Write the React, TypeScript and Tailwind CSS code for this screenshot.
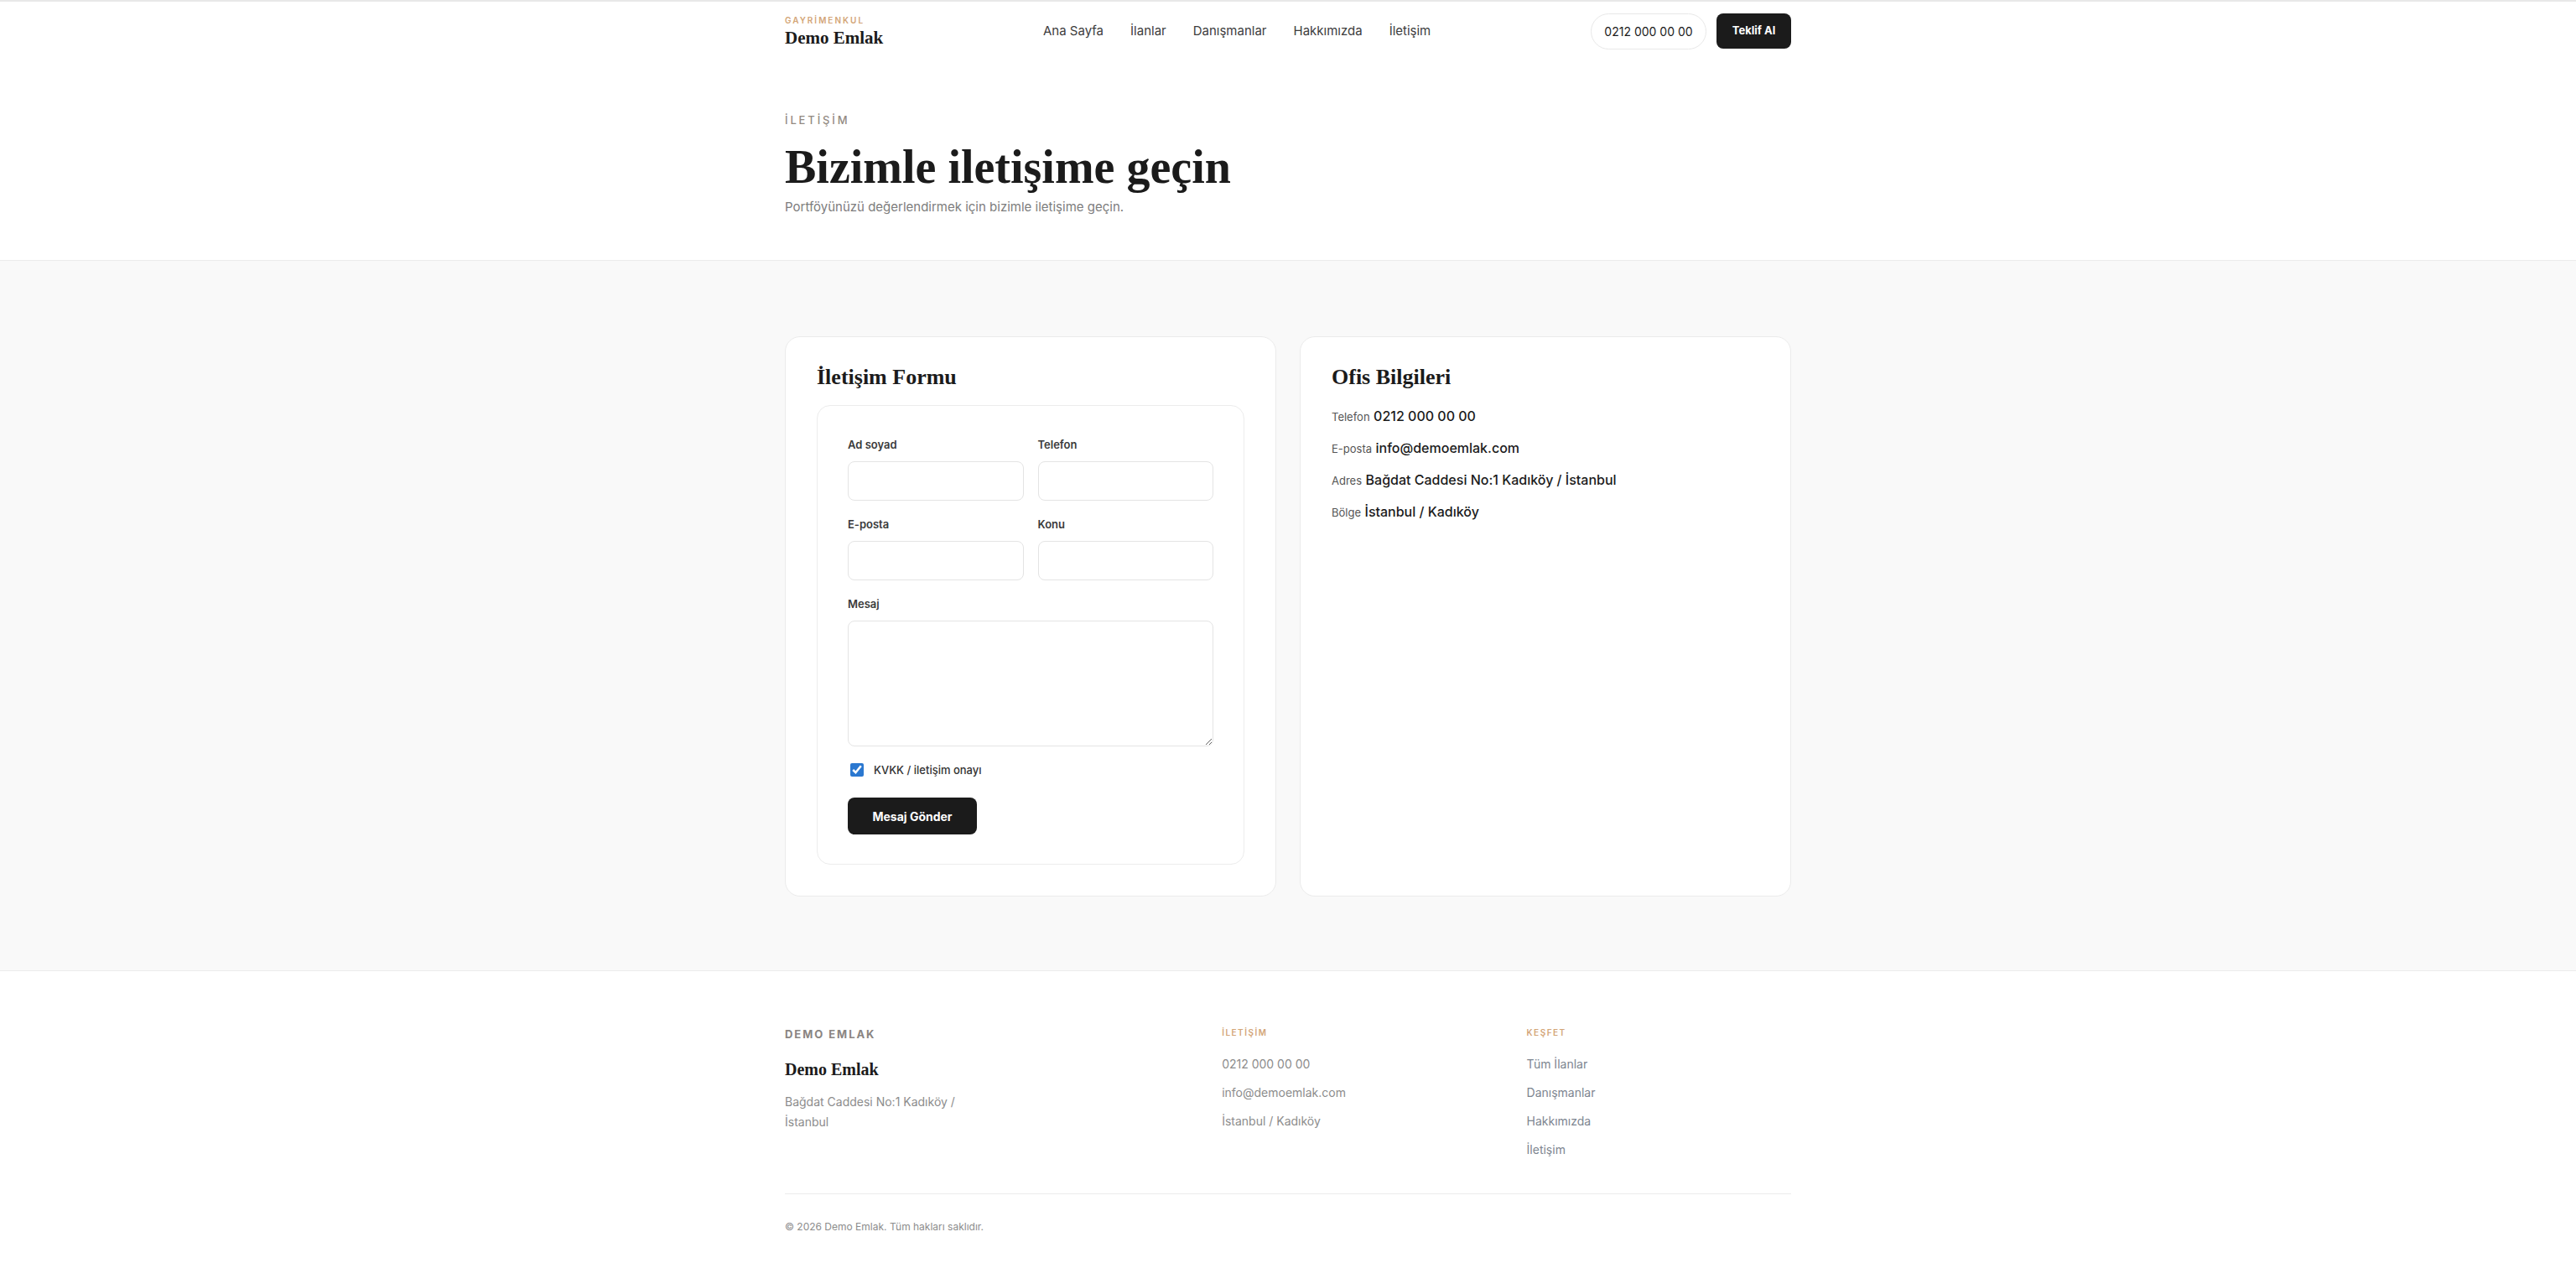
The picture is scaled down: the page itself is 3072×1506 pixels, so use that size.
const sans = "font-['Inter','Liberation_Sans',sans-serif]";
const serif = "font-['Liberation_Serif','DejaVu_Serif',serif]";

const navLinks = ["Ana Sayfa", "İlanlar", "Danışmanlar", "Hakkımızda", "İletişim"];

const office = [
  { label: "Telefon", value: "0212 000 00 00" },
  { label: "E-posta", value: "info@demoemlak.com" },
  { label: "Adres", value: "Bağdat Caddesi No:1 Kadıköy / İstanbul" },
  { label: "Bölge", value: "İstanbul / Kadıköy" },
];

function Field({ label }: { label: string }) {
  return (
    <label className="flex flex-col gap-[12px]">
      <span className="text-[13px] leading-[16px] font-semibold text-[#3a3a3a]">{label}</span>
      <input className="h-[47px] w-full rounded-[8px] border border-[#e4e4e4] bg-white px-3 text-sm outline-none" />
    </label>
  );
}

export default function App() {
  return (
    <div className={`${sans} min-h-screen bg-white text-[#1b1b1b]`}>
      {/* Header */}
      <header className="border-t-2 border-[#e8e8e8] bg-white">
        <div className="mx-auto flex h-[70px] max-w-[1200px] items-center justify-between">
          <div className="flex flex-col">
            <span className="text-[10px] font-semibold tracking-[0.2em] text-[#d3a577]">GAYRİMENKUL</span>
            <span className={`${serif} text-[21px] leading-[26px] font-bold text-[#1b1b1b]`}>Demo Emlak</span>
          </div>
          <nav className="flex items-center gap-8 text-[15px] text-[#3d3d3d]">
            {navLinks.map((l) => (
              <a key={l} href="#">
                {l}
              </a>
            ))}
          </nav>
          <div className="flex items-center gap-3">
            <span className="flex h-[43px] w-[138px] items-center justify-center rounded-full border border-[#e8e8e8] text-[14px] text-[#1b1b1b]">
              0212 000 00 00
            </span>
            <button className="h-[42px] w-[89px] rounded-[8px] bg-[#1b1b1b] text-[13px] font-bold text-white">
              Teklif Al
            </button>
          </div>
        </div>
      </header>

      {/* Hero */}
      <section className="border-b border-[#ececec] bg-white">
        <div className="mx-auto max-w-[1200px] pt-[62px] pb-[52px]">
          <p className="text-[13px] font-medium tracking-[0.22em] text-[#938a82]">İLETİŞİM</p>
          <h1 className={`${serif} mt-[14px] text-[56px] leading-[62px] font-bold text-[#1b1b1b]`}>
            Bizimle iletişime geçin
          </h1>
          <p className="mt-[6px] text-[15px] text-[#7d7d7d]">
            Portföyünüzü değerlendirmek için bizimle iletişime geçin.
          </p>
        </div>
      </section>

      {/* Content */}
      <section className="bg-[#f9f9f9] pt-[90px] pb-[88px]">
        <div className="mx-auto grid max-w-[1200px] grid-cols-2 gap-[28px]">
          <div className="rounded-[18px] border border-[#ebebeb] bg-white px-[37px] pt-[32px] pb-[37px]">
            <h2 className={`${serif} text-[26px] leading-[32px] font-bold`}>İletişim Formu</h2>
            <form className="mt-[17px] rounded-[16px] border border-[#ececec] px-[36px] pt-[38px] pb-[35px]">
              <div className="grid grid-cols-2 gap-x-[17px] gap-y-[20px]">
                <Field label="Ad soyad" />
                <Field label="Telefon" />
                <Field label="E-posta" />
                <Field label="Konu" />
                <label className="col-span-2 flex flex-col gap-[12px]">
                  <span className="text-[13px] leading-[16px] font-semibold text-[#3a3a3a]">Mesaj</span>
                  <textarea className="block h-[150px] w-full rounded-[8px] border border-[#e4e4e4] p-3 text-sm outline-none" />
                </label>
              </div>
              <label className="mt-[20px] flex h-[16px] items-center gap-[12px] pl-[3px]">
                <input type="checkbox" defaultChecked className="m-0 h-[16px] w-[16px] accent-[#2b78d0]" />
                <span className="text-[13px] leading-[16px] font-medium text-[#333]">KVKK / iletişim onayı</span>
              </label>
              <button
                type="button"
                className="mt-[25px] block h-[44px] w-[154px] rounded-[8px] bg-[#1b1b1b] text-[14px] font-bold text-white"
              >
                Mesaj Gönder
              </button>
            </form>
          </div>

          <div className="rounded-[18px] border border-[#ebebeb] bg-white px-[37px] pt-[32px] pb-[37px]">
            <h2 className={`${serif} text-[26px] leading-[32px] font-bold`}>Ofis Bilgileri</h2>
            <div className="mt-[19px] flex flex-col gap-[15px]">
              {office.map((o) => (
                <p key={o.label} className="leading-[22px]">
                  <span className="text-[13px] text-[#555]">{o.label}</span>{" "}
                  <span className="text-[16px] font-medium text-[#1b1b1b]">{o.value}</span>
                </p>
              ))}
            </div>
          </div>
        </div>
      </section>

      {/* Footer */}
      <footer className="border-t border-[#ececec] bg-white">
        <div className="mx-auto max-w-[1200px] pt-[66px]">
          <div className="grid grid-cols-[1.5fr_1fr_1fr] gap-12 pb-[42px]">
            <div>
              <p className="text-[13px] font-bold tracking-[0.15em] text-[#8a8582]">DEMO EMLAK</p>
              <p className={`${serif} mt-[16px] text-[20px] font-bold`}>Demo Emlak</p>
              <p className="mt-[12px] max-w-[230px] text-[14px] leading-[24px] text-[#8c8c8c]">
                Bağdat Caddesi No:1 Kadıköy / İstanbul
              </p>
            </div>
            <div>
              <p className="text-[10px] font-semibold tracking-[0.15em] text-[#d3a577]">İLETİŞİM</p>
              <ul className="mt-[20px] flex flex-col gap-[14px] text-[14px] leading-[20px] text-[#8c8c8c]">
                <li>0212 000 00 00</li>
                <li>info@demoemlak.com</li>
                <li>İstanbul / Kadıköy</li>
              </ul>
            </div>
            <div>
              <p className="text-[10px] font-semibold tracking-[0.15em] text-[#d3a577]">KEŞFET</p>
              <ul className="mt-[20px] flex flex-col gap-[14px] text-[14px] leading-[20px] text-[#7d8590]">
                <li>Tüm İlanlar</li>
                <li>Danışmanlar</li>
                <li>Hakkımızda</li>
                <li>İletişim</li>
              </ul>
            </div>
          </div>
          <div className="border-t border-[#ececec] pt-[30px] pb-[38px]">
            <p className="text-[12px] text-[#8c8c8c]">© 2026 Demo Emlak. Tüm hakları saklıdır.</p>
          </div>
        </div>
      </footer>
    </div>
  );
}
